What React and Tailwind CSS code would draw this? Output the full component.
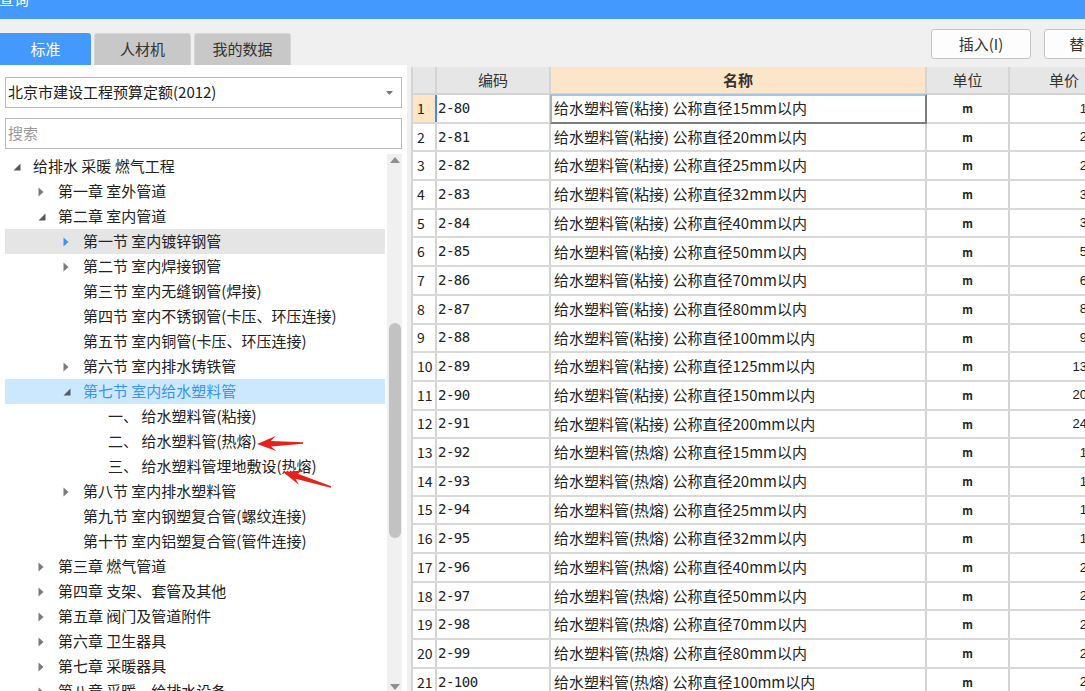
import React from "react";

const tree = [
  { l: 0, t: "给排水 采暖 燃气工程", icon: "open" },
  { l: 1, t: "第一章 室外管道", icon: "closed" },
  { l: 1, t: "第二章 室内管道", icon: "open" },
  { l: 2, t: "第一节 室内镀锌钢管", icon: "closed", hover: true },
  { l: 2, t: "第二节 室内焊接钢管", icon: "closed" },
  { l: 2, t: "第三节 室内无缝钢管(焊接)" },
  { l: 2, t: "第四节 室内不锈钢管(卡压、环压连接)" },
  { l: 2, t: "第五节 室内铜管(卡压、环压连接)" },
  { l: 2, t: "第六节 室内排水铸铁管", icon: "closed" },
  { l: 2, t: "第七节 室内给水塑料管", icon: "open", sel: true },
  { l: 3, n: "一、", t: "给水塑料管(粘接)" },
  { l: 3, n: "二、", t: "给水塑料管(热熔)" },
  { l: 3, n: "三、", t: "给水塑料管埋地敷设(热熔)" },
  { l: 2, t: "第八节 室内排水塑料管", icon: "closed" },
  { l: 2, t: "第九节 室内钢塑复合管(螺纹连接)" },
  { l: 2, t: "第十节 室内铝塑复合管(管件连接)" },
  { l: 1, t: "第三章 燃气管道", icon: "closed" },
  { l: 1, t: "第四章 支架、套管及其他", icon: "closed" },
  { l: 1, t: "第五章 阀门及管道附件", icon: "closed" },
  { l: 1, t: "第六章 卫生器具", icon: "closed" },
  { l: 1, t: "第七章 采暖器具", icon: "closed" },
  { l: 1, t: "第八章 采暖、给排水设备", icon: "closed" },
];

const indent = ["pl-0", "pl-[25px]", "pl-[50px]", "pl-[75px]"];

const sizes = ["15", "20", "25", "32", "40", "50", "70", "80", "100", "125", "150", "200"];
const prices1 = ["1.52", "2.01", "2.63", "3.45", "3.98", "5.62", "6.87", "8.43", "9.76", "13.21", "20.18", "24.65"];
const sizes2 = ["15", "20", "25", "32", "40", "50", "70", "80", "100"];
const prices2 = ["1.48", "1.67", "1.89", "1.95", "2.12", "2.34", "2.56", "2.81", "2.97"];

const rows = [
  ...sizes.map((s, i) => ({ code: `2-${80 + i}`, name: `给水塑料管(粘接) 公称直径${s}mm以内`, price: prices1[i] })),
  ...sizes2.map((s, i) => ({ code: `2-${92 + i}`, name: `给水塑料管(热熔) 公称直径${s}mm以内`, price: prices2[i] })),
];

function TreeIcon({ type, blue }) {
  if (type === "open")
    return (
      <svg width="8" height="8" viewBox="0 0 8 8">
        <path d="M7.5 0.5 L7.5 7.5 L0.5 7.5 Z" fill="#5a5a5a" />
      </svg>
    );
  if (type === "closed")
    return (
      <svg width="6" height="10" viewBox="0 0 6 10">
        <path d="M0.5 0.5 L5.5 5 L0.5 9.5 Z" fill={blue ? "#3c95f0" : "#7a7a7a"} />
      </svg>
    );
  return null;
}

function arrowPoints(tx, ty, hx, hy) {
  const dx = hx - tx;
  const dy = hy - ty;
  const L = Math.hypot(dx, dy);
  const ux = dx / L;
  const uy = dy / L;
  const nx = -uy;
  const ny = ux;
  const pt = (d, w) => `${(hx - ux * d + nx * w).toFixed(1)},${(hy - uy * d + ny * w).toFixed(1)}`;
  return [pt(L, 0.7), pt(14, 2.8), pt(19, 7.5), pt(0, 0), pt(19, -7.5), pt(14, -2.8), pt(L, -0.7)].join(" ");
}

export default function App() {
  return (
    <div className="relative w-[1085px] h-[691px] overflow-hidden bg-[#f0f0f0] font-['Noto_Sans_CJK_SC',sans-serif] text-[#222]">
      {/* title bar */}
      <div className="h-[19px] bg-[#4499ff] overflow-hidden">
        <div className="text-[15px] leading-none text-white -mt-[9px] -ml-[1px]">查询</div>
      </div>

      {/* toolbar + tabs */}
      <div className="h-[46px] flex">
        <div className="flex items-end gap-[3px] pt-[14px] shrink-0">
          <div className="w-[91px] h-[32px] bg-[#4499ff] rounded-tr-[3px] flex items-center justify-center text-white text-[15px]">标准</div>
          <div className="w-[97px] h-[32px] bg-[#c8c8c8] border border-b-0 border-[#d6d6d6] rounded-t-[3px] flex items-center justify-center text-[#333] text-[15px]">人材机</div>
          <div className="w-[97px] h-[32px] bg-[#c8c8c8] border border-b-0 border-[#d6d6d6] rounded-t-[3px] flex items-center justify-center text-[#333] text-[15px]">我的数据</div>
        </div>
        <div className="flex gap-[13px] ml-[640px] mt-[10px] shrink-0">
          <div className="w-[100px] h-[30px] bg-[#fdfdfd] border border-[#c4c4c4] rounded-[3px] flex items-center justify-center text-[15px] text-[#333]">插入(I)</div>
          <div className="w-[100px] h-[30px] bg-[#fdfdfd] border border-[#c4c4c4] rounded-[3px] flex items-center justify-center text-[15px] text-[#333]">替换(R)</div>
        </div>
      </div>

      {/* main */}
      <div className="flex h-[626px]">
        {/* left panel */}
        <div className="w-[407px] shrink-0 bg-white flex flex-col pl-[5px]">
          <div className="mt-[12px] w-[397px] h-[31px] border border-[#b9b9b9] flex items-center justify-between pl-[2px] pr-[8px]">
            <span className="text-[15px] text-[#222]">北京市建设工程预算定额(2012)</span>
            <svg width="7" height="4" viewBox="0 0 7 4">
              <path d="M0 0 L7 0 L3.5 4 Z" fill="#777" />
            </svg>
          </div>
          <div className="mt-[10px] w-[397px] h-[31px] border border-[#b9b9b9] flex items-center pl-[2px]">
            <span className="text-[15px] text-[#9a9a9a]">搜索</span>
          </div>
          <div className="mt-[5px] flex flex-1 min-h-0">
            <div className="w-[380px] overflow-hidden">
              {tree.map((r, i) => (
                <div
                  key={i}
                  className={`h-[25px] flex items-center ${indent[r.l]} ${r.hover ? "bg-[#e5e5e5]" : ""} ${r.sel ? "bg-[#cce8ff]" : ""}`}
                >
                  <div className="w-[28px] shrink-0 pl-[8px] flex items-center">
                    <TreeIcon type={r.icon} blue={r.hover} />
                  </div>
                  {r.n ? (
                    <span className="text-[15px] whitespace-nowrap text-[#222]">
                      {r.n} {r.t}
                    </span>
                  ) : (
                    <span className={`text-[15px] whitespace-nowrap ${r.sel ? "text-[#3a94ee]" : "text-[#222]"}`}>{r.t}</span>
                  )}
                </div>
              ))}
            </div>
            <div className="ml-[2px] w-[15px] bg-[#f0f0f0] flex flex-col items-center">
              <svg className="mt-[3px]" width="10" height="6" viewBox="0 0 10 6">
                <path d="M0 6 L5 0 L10 6 Z" fill="#8f8f8f" />
              </svg>
              <div className="mt-[160px] w-[12px] h-[215px] rounded-full bg-[#c2c2c2]" />
              <svg className="mt-auto mb-[1px]" width="10" height="6" viewBox="0 0 10 6">
                <path d="M0 0 L10 0 L5 6 Z" fill="#8f8f8f" />
              </svg>
            </div>
          </div>
        </div>

        {/* table */}
        <div className="ml-[4px] mt-[2px] flex-1 min-w-0 overflow-hidden bg-white border-l-2 border-[#d4d4d4]">
          <div className="flex h-[28px] bg-[#e6e6e6] border-b-2 border-[#d4d4d4] text-[15px] text-[#333]">
            <div className="w-[24px] shrink-0 border-r-2 border-[#d4d4d4]" />
            <div className="w-[114px] shrink-0 border-r-2 border-[#d4d4d4] flex items-center justify-center">编码</div>
            <div className="w-[376px] shrink-0 border-r-2 border-[#d4d4d4] bg-[#fde6c8] flex items-center justify-center font-bold">名称</div>
            <div className="w-[83px] shrink-0 border-r-2 border-[#d4d4d4] flex items-center justify-center">单位</div>
            <div className="w-[108px] shrink-0 flex items-center justify-center">单价</div>
          </div>
          {rows.map((r, i) => (
            <div key={i} className="flex h-[28.7px] border-b-2 border-[#d9d9d9]">
              <div
                className={`w-[24px] shrink-0 border-r-2 flex items-center pl-[4px] text-[14px] ${
                  i === 0 ? "bg-[#fde5c6] border-[#3d8ef0]" : "border-[#d4d4d4]"
                }`}
              >
                {i + 1}
              </div>
              <div className="w-[114px] shrink-0 border-r-2 border-[#d4d4d4] flex items-center pl-[1px] text-[14px] font-['DejaVu_Sans_Mono',monospace] tracking-[-0.5px]">
                {r.code}
              </div>
              <div className="relative w-[376px] shrink-0 border-r-2 border-[#d4d4d4] flex items-center pl-[3px] text-[15px] whitespace-nowrap">
                {i === 0 && (
                  <div className="absolute -left-[1px] -top-[1px] -right-[2px] -bottom-[2px] border-2 border-[#7d7d7d] border-t-[#9fc4ee] border-l-[#b0b0b0]" />
                )}
                {r.name}
              </div>
              <div className="w-[83px] shrink-0 border-r-2 border-[#d4d4d4] flex items-center justify-center text-[11px] font-bold">m</div>
              <div className="w-[108px] shrink-0 flex items-center justify-end pr-[13px] text-[13px] font-['Liberation_Sans',sans-serif]">
                {r.price}
              </div>
            </div>
          ))}
        </div>
      </div>

      {/* red annotation arrows */}
      <svg className="absolute left-0 top-0 pointer-events-none" width="1085" height="691">
        <polygon points={arrowPoints(303, 443, 257, 444)} fill="#e8201a" />
        <polygon points={arrowPoints(331, 487, 283, 472)} fill="#e8201a" />
      </svg>
    </div>
  );
}
